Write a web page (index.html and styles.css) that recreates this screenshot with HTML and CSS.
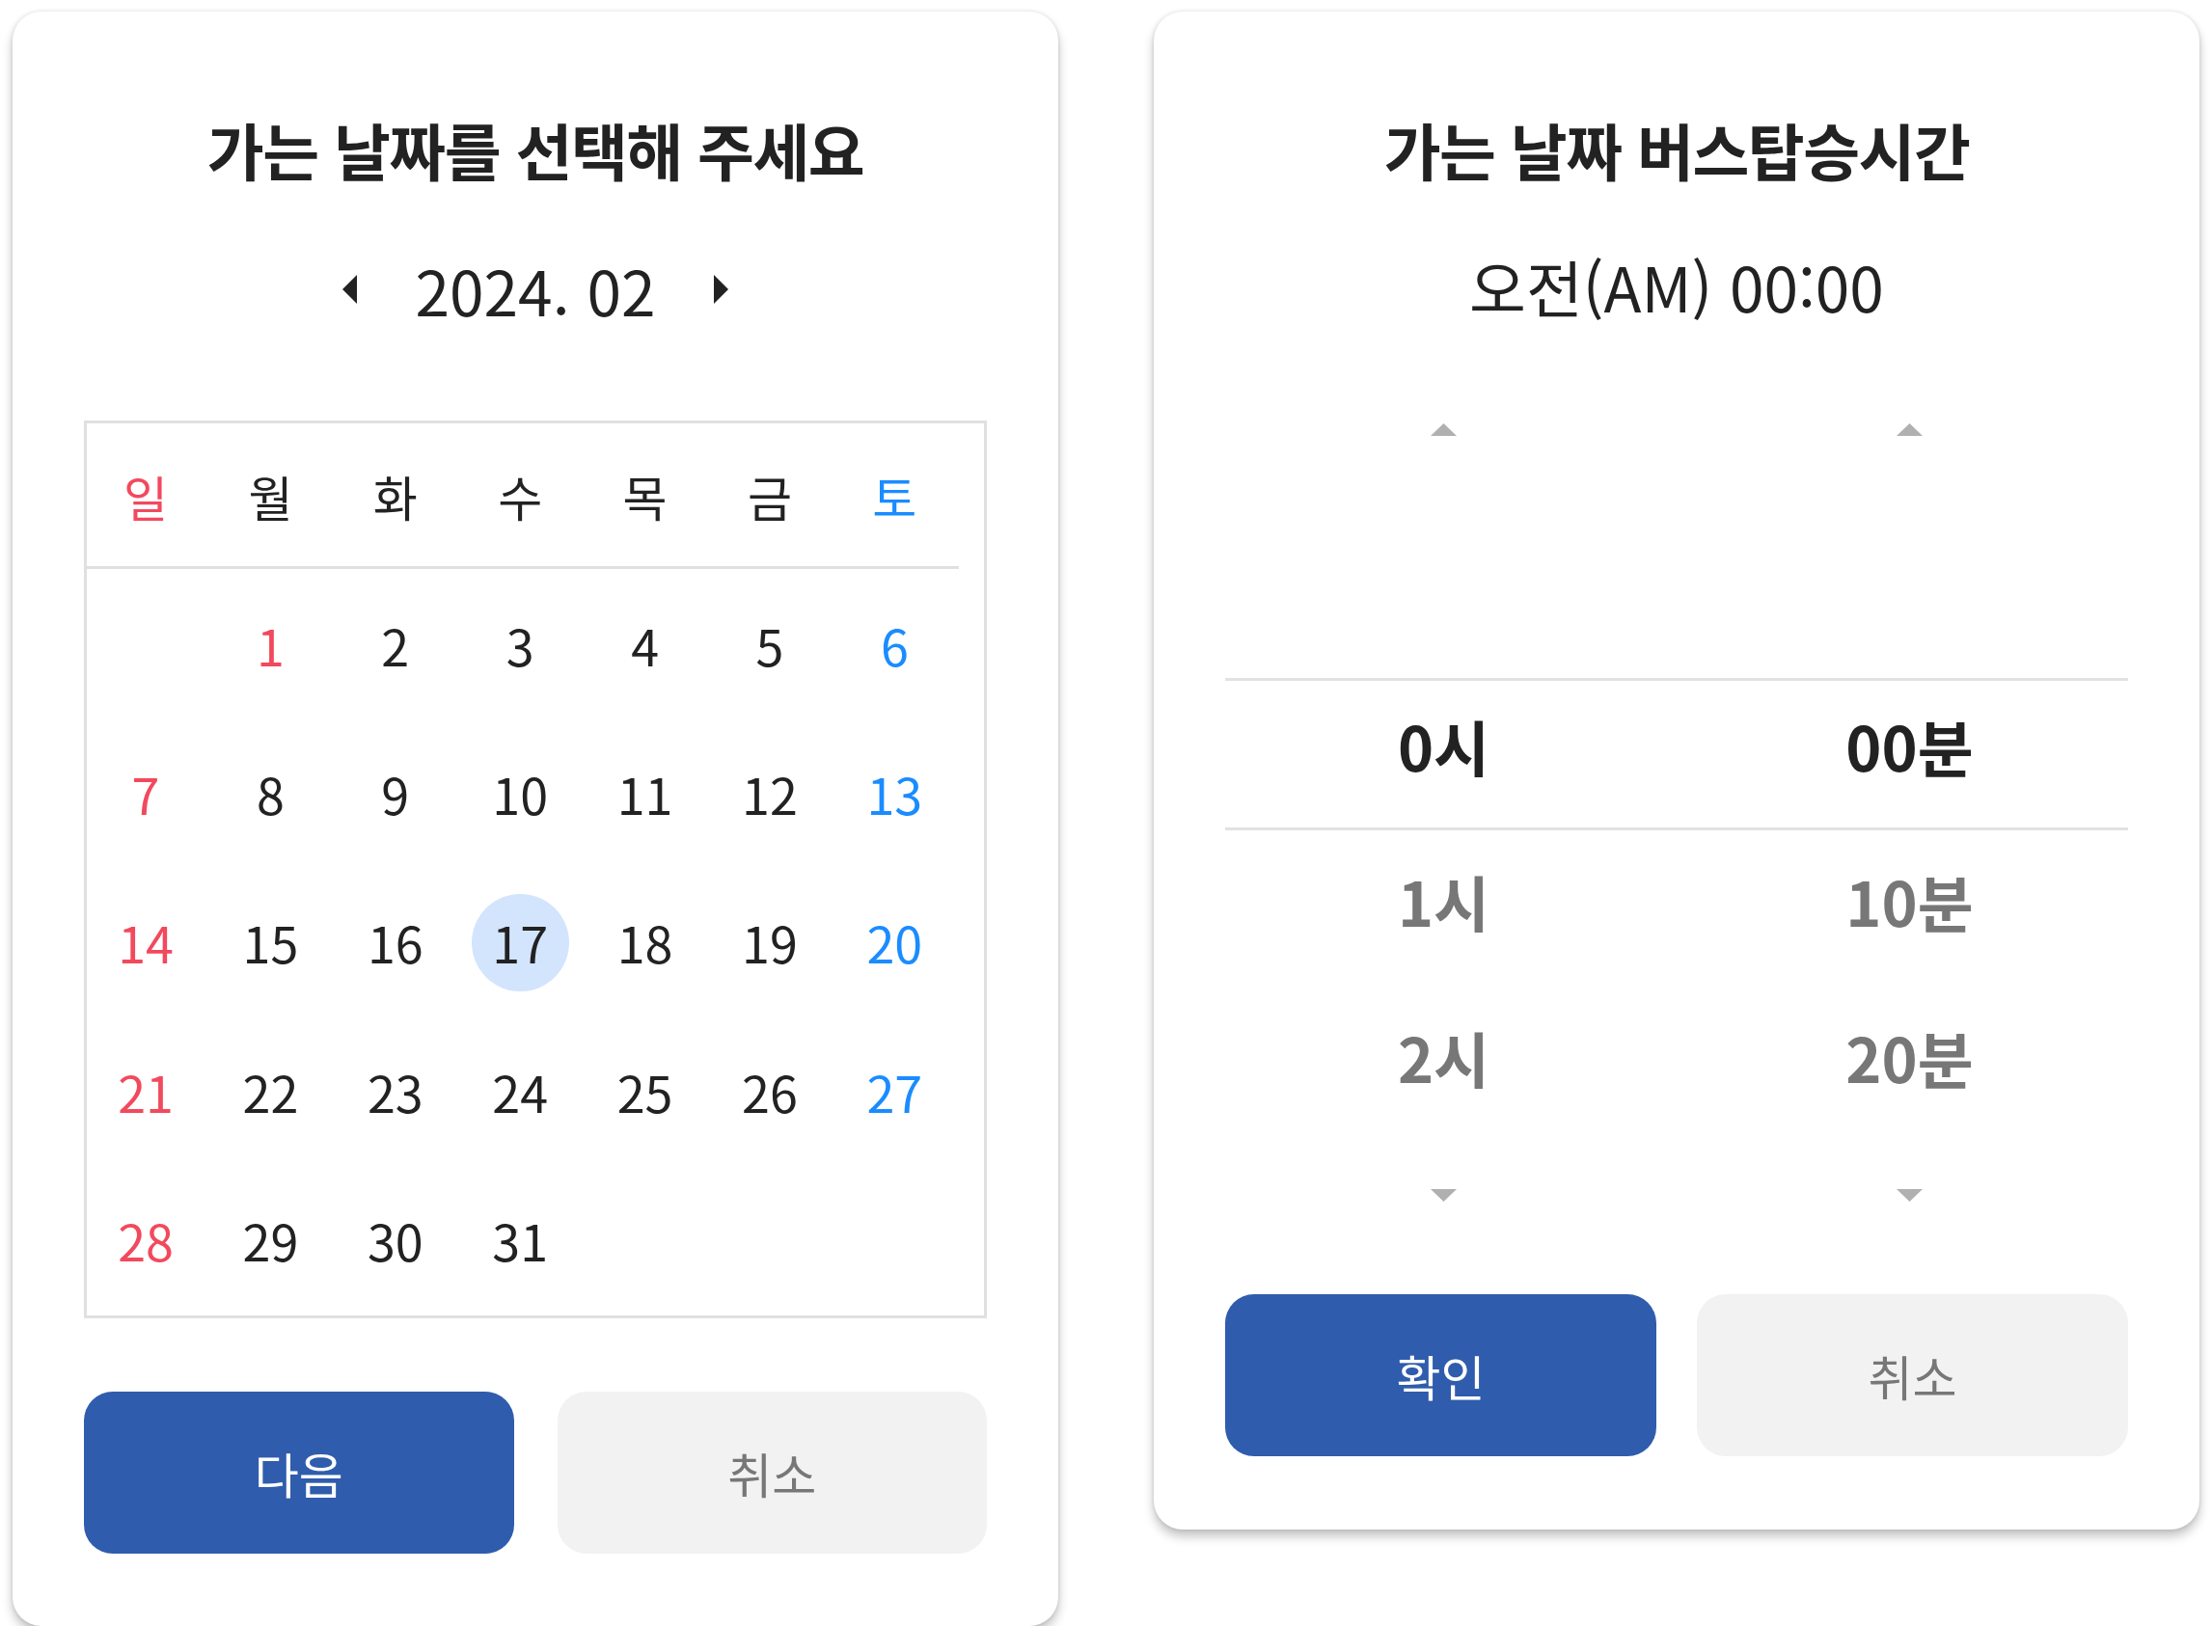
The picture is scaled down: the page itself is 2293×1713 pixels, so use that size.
FILE: index.html
```html
<!DOCTYPE html>
<html lang="ko">
<head>
<meta charset="utf-8">
<title>가는 날짜 · 버스탑승시간 선택</title>
<link rel="stylesheet" href="styles.css">
</head>
<body>
<main class="screens">

  <!-- 날짜 선택 -->
  <section class="sheet sheet--date">
    <h1 class="sheet-title">가는 날짜를 선택해 주세요</h1>

    <div class="month-nav">
      <button class="month-step" type="button" aria-label="이전 달">
        <svg viewBox="0 0 15 30" width="15" height="30"><polygon points="15,0 15,30 0,15"/></svg>
      </button>
      <span class="month-label">2024. 02</span>
      <button class="month-step" type="button" aria-label="다음 달">
        <svg viewBox="0 0 15 30" width="15" height="30"><polygon points="0,0 15,15 0,30"/></svg>
      </button>
    </div>

    <div class="calendar">
      <div class="cal-week">
        <span class="sun">일</span>
        <span>월</span>
        <span>화</span>
        <span>수</span>
        <span>목</span>
        <span>금</span>
        <span class="sat">토</span>
      </div>
      <div class="cal-days">
        <span class="day"></span>
        <span class="day sun">1</span>
        <span class="day">2</span>
        <span class="day">3</span>
        <span class="day">4</span>
        <span class="day">5</span>
        <span class="day sat">6</span>

        <span class="day sun">7</span>
        <span class="day">8</span>
        <span class="day">9</span>
        <span class="day">10</span>
        <span class="day">11</span>
        <span class="day">12</span>
        <span class="day sat">13</span>

        <span class="day sun">14</span>
        <span class="day">15</span>
        <span class="day">16</span>
        <span class="day is-selected">17</span>
        <span class="day">18</span>
        <span class="day">19</span>
        <span class="day sat">20</span>

        <span class="day sun">21</span>
        <span class="day">22</span>
        <span class="day">23</span>
        <span class="day">24</span>
        <span class="day">25</span>
        <span class="day">26</span>
        <span class="day sat">27</span>

        <span class="day sun">28</span>
        <span class="day">29</span>
        <span class="day">30</span>
        <span class="day">31</span>
      </div>
    </div>

    <div class="actions actions--date">
      <button class="btn btn--primary" type="button">다음</button>
      <button class="btn btn--ghost" type="button">취소</button>
    </div>
  </section>

  <!-- 시간 선택 -->
  <section class="sheet sheet--time">
    <h1 class="sheet-title">가는 날짜 버스탑승시간</h1>
    <p class="time-now">오전(AM) 00:00</p>

    <div class="wheel">
      <div class="wheel-arrows">
        <svg class="caret" viewBox="0 0 27 13" width="27" height="13"><polygon points="13.5,0 27,13 0,13"/></svg>
        <svg class="caret" viewBox="0 0 27 13" width="27" height="13"><polygon points="13.5,0 27,13 0,13"/></svg>
      </div>

      <div class="wheel-band">
        <span>0시</span>
        <span>00분</span>
      </div>
      <div class="wheel-row">
        <span>1시</span>
        <span>10분</span>
      </div>
      <div class="wheel-row">
        <span>2시</span>
        <span>20분</span>
      </div>

      <div class="wheel-arrows wheel-arrows--down">
        <svg class="caret" viewBox="0 0 27 13" width="27" height="13"><polygon points="0,0 27,0 13.5,13"/></svg>
        <svg class="caret" viewBox="0 0 27 13" width="27" height="13"><polygon points="0,0 27,0 13.5,13"/></svg>
      </div>
    </div>

    <div class="actions actions--time">
      <button class="btn btn--primary" type="button">확인</button>
      <button class="btn btn--ghost" type="button">취소</button>
    </div>
  </section>

</main>
</body>
</html>
```

FILE: styles.css
```css
* {
  box-sizing: border-box;
}

body {
  margin: 0;
  background: #ffffff;
  color: #222222;
  font-family: "Noto Sans CJK KR", "Noto Sans", sans-serif;
}

.screens {
  display: flex;
  align-items: flex-start;
  gap: 99px;
  padding: 12px 0 0 13px;
}

/* ---------- sheet ---------- */

.sheet {
  width: 1084px;
  padding: 102px 74px 75px;
  background: #ffffff;
  border-radius: 30px;
  box-shadow: 0 7px 11px rgba(0, 0, 0, 0.24), 0 0 4px rgba(0, 0, 0, 0.12);
}

.sheet--time {
  padding-bottom: 76px;
}

.sheet-title {
  margin: 0;
  font-size: 64px;
  font-weight: 700;
  line-height: 80px;
  letter-spacing: -1.5px;
  text-align: center;
  color: #222222;
}

/* ---------- month navigation ---------- */

.month-nav {
  display: flex;
  align-items: center;
  justify-content: center;
  gap: 61px;
  height: 80px;
  margin-top: 66px;
}

.month-step {
  display: flex;
  padding: 0;
  border: 0;
  background: none;
  fill: #222222;
}

.month-label {
  font-size: 64px;
  line-height: 80px;
}

/* ---------- calendar ---------- */

.calendar {
  margin-top: 96px;
  border: 3px solid #e0e0e0;
}

.cal-week,
.cal-days {
  display: grid;
  grid-template-columns: repeat(7, 120px);
  column-gap: 9.4px;
  padding-left: 1px;
}

.cal-week {
  width: 904px;
  padding-top: 45px;
  padding-bottom: 43px;
  border-bottom: 3px solid #e0e0e0;
  font-size: 50px;
  line-height: 60px;
  text-align: center;
}

.cal-days {
  grid-auto-rows: 101px;
  row-gap: 53.4px;
  padding-top: 28px;
  padding-bottom: 27px;
  font-size: 52px;
  line-height: 1;
}

.day {
  display: flex;
  align-items: center;
  justify-content: center;
}

.sun {
  color: #f2495d;
}

.sat {
  color: #1a8cff;
}

.day.is-selected {
  justify-self: center;
  width: 101px;
  border-radius: 50%;
  background: #d3e4fd;
}

/* ---------- time display & wheel ---------- */

.time-now {
  margin: 62px 0 0;
  font-size: 64px;
  line-height: 80px;
  text-align: center;
}

.wheel {
  margin-top: 103px;
}

.wheel-arrows,
.wheel-band,
.wheel-row {
  display: grid;
  grid-template-columns: 1fr 1fr;
  column-gap: 30px;
  justify-items: center;
}

.wheel-arrows {
  height: 13px;
}

.wheel-arrows--down {
  margin-top: 49px;
}

.caret {
  display: block;
  fill: #b0b0b0;
}

.wheel-band,
.wheel-row {
  font-size: 63px;
  font-weight: 700;
  line-height: 66px;
}

.wheel-band {
  margin-top: 251px;
  height: 158px;
  padding-top: 34px;
  border-top: 3px solid #e2e2e2;
  border-bottom: 3px solid #e2e2e2;
  color: #222222;
}

.wheel-row {
  height: 161.5px;
  padding-top: 40px;
  color: #777777;
}

/* ---------- buttons ---------- */

.actions {
  display: grid;
  grid-template-columns: 1fr 1fr;
}

.actions--date {
  margin-top: 76px;
  column-gap: 45px;
}

.actions--time {
  margin-top: 96px;
  column-gap: 42px;
}

.btn {
  height: 168px;
  padding: 0;
  border: 0;
  border-radius: 30px;
  font-family: inherit;
  font-size: 50px;
  line-height: 1;
}

.btn--primary {
  background: #2f5cad;
  color: #ffffff;
}

.btn--ghost {
  background: #f2f2f2;
  color: #777777;
}
```
